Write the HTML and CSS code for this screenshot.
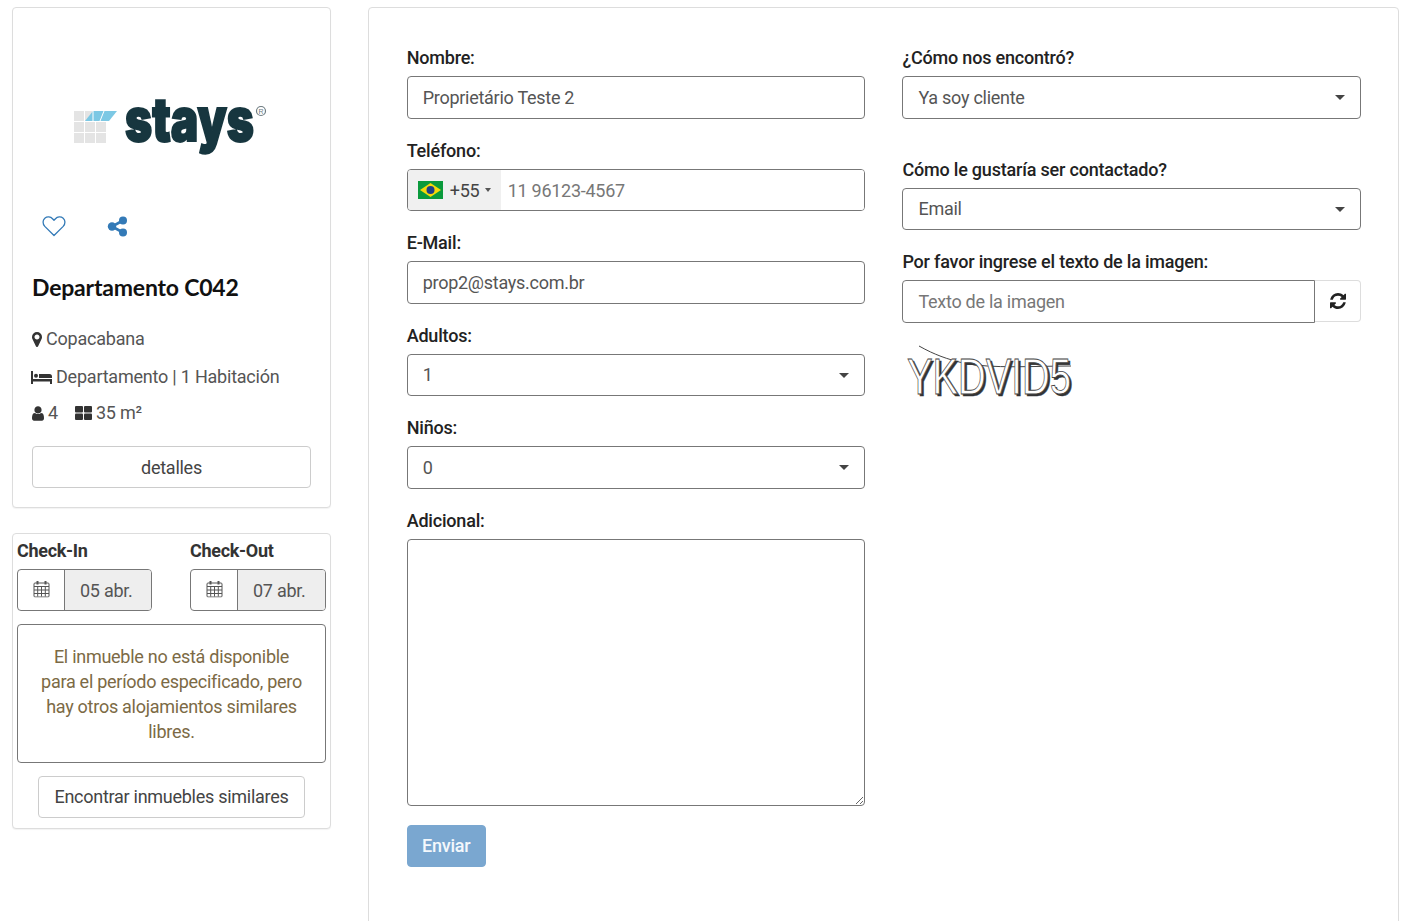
FILE: index.html
```html
<!DOCTYPE html>
<html lang="es">
<head>
<meta charset="utf-8">
<title>Departamento C042</title>
<link rel="stylesheet" href="styles.css">
</head>
<body>
<div class="page">
  <aside class="side">
    <section class="card listing">
      <div class="logo">
        <svg width="200" height="60" viewBox="0 0 200 60">
          <g fill="#e4e4e4">
            <rect x="0" y="20" width="10" height="10"/><rect x="11" y="20" width="10" height="10"/><rect x="22" y="20" width="10" height="10"/>
            <rect x="0" y="31" width="10" height="10"/><rect x="11" y="31" width="10" height="10"/><rect x="22" y="31" width="10" height="10"/>
            <rect x="0" y="42" width="10" height="10"/><rect x="11" y="42" width="10" height="10"/><rect x="22" y="42" width="10" height="10"/>
          </g>
          <path d="M19 20h24l-8 10H11z" fill="#7cc8e4"/>
          <path d="M19 20v10M30 20l-4 10" stroke="#fff" stroke-width="1"/>
          <text x="51" y="50" class="logo-word" textLength="129" lengthAdjust="spacingAndGlyphs">stays</text>
          <circle cx="187" cy="20" r="4.500" fill="none" stroke="#6d7b80" stroke-width="1.200"/>
          <text x="187" y="22.500" class="logo-reg">R</text>
        </svg>
      </div>
      <div class="actions">
        <svg class="ic-heart" width="24" height="22" viewBox="0 0 24 22"><path d="M12 20.500 2.800 11.400C.4 8.800.6 5.200 2.800 3.200c2.400-2 5.800-1.600 7.700.5L12 5.300l1.500-1.600c1.900-2.100 5.300-2.500 7.700-.5 2.200 2 2.400 5.600 0 8.200z" fill="none" stroke="#337ab7" stroke-width="1.300" stroke-linejoin="round"/></svg>
        <svg class="ic-share" width="21" height="21" viewBox="0 0 21 21"><path d="M16 4.500 5 10.500l11 6" fill="none" stroke="#337ab7" stroke-width="2.600"/><circle cx="16" cy="4.500" r="4" fill="#337ab7"/><circle cx="5" cy="10.500" r="4.200" fill="#337ab7"/><circle cx="16" cy="16.500" r="4" fill="#337ab7"/></svg>
      </div>
      <h1 class="title">Departamento C042</h1>
      <p class="meta meta-place">
        <svg class="ic" width="10" height="15" viewBox="0 128 1024 1536"><path d="M768 640q0-106-75-181t-181-75-181 75-75 181 75 181 181 75 181-75 75-181zm256 0q0 109-33 179l-364 774q-16 33-47.500 52t-67.500 19-67.500-19-46.500-52l-365-774q-33-70-33-179 0-212 150-362t362-150 362 150 150 362z" fill="#333"/></svg>
        <span>Copacabana</span>
      </p>
      <p class="meta meta-type">
        <svg class="ic ic-bed" width="21" height="13" viewBox="0 0 21 13"><path d="M0 0h2v8h19v5h-2v-2.500H2V13H0z" fill="#333"/><circle cx="5" cy="4.800" r="2" fill="#333"/><path d="M8 3h10.500A2.500 2.500 0 0 1 21 5.500V7H8z" fill="#333"/></svg>
        <span>Departamento | 1 Habitación</span>
      </p>
      <p class="meta meta-size">
        <svg class="ic" width="12" height="15" viewBox="256 128 1280 1536"><path d="M1536 1399q0 109-62.500 187t-150.500 78h-854q-88 0-150.500-78t-62.500-187q0-85 8.500-160.500t31.500-152 58.500-131 94-89 134.500-34.500q131 128 313 128t313-128q76 0 134.500 34.500t94 89 58.500 131 31.500 152 8.500 160.500zm-256-887q0 159-112.500 271.500t-271.500 112.500-271.500-112.500-112.500-271.500 112.500-271.500 271.500-112.500 271.500 112.500 112.500 271.500z" fill="#333"/></svg>
        <span class="guests">4</span>
        <svg class="ic" width="17" height="14" viewBox="0 0 17 14"><rect x="0" y="0" width="8" height="6.500" rx="1" fill="#333"/><rect x="9" y="0" width="8" height="6.500" rx="1" fill="#333"/><rect x="0" y="7.500" width="8" height="6.500" rx="1" fill="#333"/><rect x="9" y="7.500" width="8" height="6.500" rx="1" fill="#333"/></svg>
        <span>35 m²</span>
      </p>
      <button class="btn btn-details" type="button">detalles</button>
    </section>

    <section class="card booking">
      <div class="dates">
        <div class="date">
          <div class="date-label">Check-In</div>
          <div class="date-group">
            <span class="date-icon"><svg width="17" height="18" viewBox="0 0 17 17"><use href="#cal"/></svg></span>
            <span class="date-value">05 abr.</span>
          </div>
        </div>
        <div class="date">
          <div class="date-label">Check-Out</div>
          <div class="date-group">
            <span class="date-icon"><svg width="17" height="18" viewBox="0 0 17 17"><use href="#cal"/></svg></span>
            <span class="date-value">07 abr.</span>
          </div>
        </div>
      </div>
      <div class="notice">El inmueble no está disponible para el período especificado, pero hay otros alojamientos similares libres.</div>
      <button class="btn btn-similar" type="button">Encontrar inmuebles similares</button>
    </section>
  </aside>

  <main class="panel">
    <form class="form">
      <div class="col">
        <div class="group">
          <label class="label">Nombre:</label>
          <input class="control" type="text" value="Proprietário Teste 2">
        </div>
        <div class="group">
          <label class="label">Teléfono:</label>
          <div class="control phone">
            <span class="dial">
              <svg width="25" height="18" viewBox="0 0 25 18"><rect width="25" height="18" fill="#0a9a3c"/><path d="M12.500 2 23 9 12.500 16 2 9z" fill="#f5d90a"/><circle cx="12.500" cy="9" r="4" fill="#1f3f86"/></svg>
              <span class="dial-code">+55</span>
              <i class="dial-caret"></i>
            </span>
            <input class="phone-input" type="text" placeholder="11 96123-4567">
          </div>
        </div>
        <div class="group">
          <label class="label">E-Mail:</label>
          <input class="control" type="text" value="prop2@stays.com.br">
        </div>
        <div class="group">
          <label class="label">Adultos:</label>
          <div class="select-wrap"><select class="control select"><option>1</option></select></div>
        </div>
        <div class="group">
          <label class="label">Niños:</label>
          <div class="select-wrap"><select class="control select"><option>0</option></select></div>
        </div>
        <div class="group">
          <label class="label">Adicional:</label>
          <textarea class="control area"></textarea>
        </div>
        <button class="btn-send" type="button">Enviar</button>
      </div>
      <div class="col">
        <div class="group group-wide">
          <label class="label">¿Cómo nos encontró?</label>
          <div class="select-wrap"><select class="control select"><option>Ya soy cliente</option></select></div>
        </div>
        <div class="group">
          <label class="label">Cómo le gustaría ser contactado?</label>
          <div class="select-wrap"><select class="control select"><option>Email</option></select></div>
        </div>
        <div class="group">
          <label class="label">Por favor ingrese el texto de la imagen:</label>
          <div class="captcha-row">
            <input class="control captcha-input" type="text" placeholder="Texto de la imagen">
            <span class="captcha-refresh">
              <svg width="16" height="16" viewBox="128 128 1536 1536"><path d="M1639 1056q0 5-1 7-64 268-268 434.500t-478 166.500q-146 0-282.500-55t-243.500-157l-129 129q-19 19-45 19t-45-19-19-45v-448q0-26 19-45t45-19h448q26 0 45 19t19 45-19 45l-137 137q71 66 161 102t187 36q134 0 250-65t186-179q11-17 53-117 8-23 30-23h192q13 0 22.500 9.500t9.500 22.500zm25-800v448q0 26-19 45t-45 19h-448q-26 0-45-19t-19-45 19-45l138-138q-148-137-349-137-134 0-250 65t-186 179q-11 17-53 117-8 23-30 23h-199q-13 0-22.500-9.500t-9.500-22.500v-7q65-268 270-434.500t480-166.500q146 0 284 55.500t245 156.500l130-129q19-19 45-19t45 19 19 45z" fill="#222"/></svg>
            </span>
          </div>
          <svg class="captcha" width="172" height="58" viewBox="0 0 172 58">
            <path d="M14 2C30 11 42 15 58 19c30 6 70 3 108 3" fill="none" stroke="#444" stroke-width="1"/>
            <text x="4" y="52" class="captcha-shadow" textLength="164" lengthAdjust="spacingAndGlyphs">YKDVID5</text>
            <text x="2" y="50" class="captcha-text" textLength="164" lengthAdjust="spacingAndGlyphs">YKDVID5</text>
          </svg>
        </div>
      </div>
    </form>
  </main>
</div>
<svg class="defs" width="0" height="0">
  <symbol id="cal" viewBox="0 0 17 17">
    <rect x="1" y="2.500" width="15" height="14" rx="1" fill="#fff" stroke="#555"/>
    <path d="M1 6h15M1 9.500h15M1 13h15M4.700 6v10M8.500 6v10M12.300 6v10" stroke="#555" stroke-width="1" fill="none"/>
    <path d="M4.500 0.500v3.500M12.500 0.500v3.500" stroke="#555" stroke-width="2"/>
  </symbol>
</svg>
</body>
</html>
```
FILE: styles.css
```css
* { box-sizing: border-box; }
html, body { margin: 0; height: 921px; overflow: hidden; background: #fff; }
body { font-family: Roboto, "Liberation Sans", sans-serif; font-size: 18px; color: #555; letter-spacing: -.27px; }
.page { display: flex; align-items: flex-start; gap: 37px; padding: 7px 21px 0 12px; }
.side { width: 319px; flex: none; display: flex; flex-direction: column; gap: 25px; }
.card { background: #fff; border: 1px solid #ddd; border-radius: 4px; box-shadow: 0 1px 1px rgba(0,0,0,.05); }
.listing { height: 501px; padding: 0 19px; display: flex; flex-direction: column; }
.logo { margin: 83px 0 0 42px; height: 60px; }
.logo svg { display: block; overflow: visible; }
.logo-word { font-family: Inter, Lato, sans-serif; font-weight: 900; font-size: 60px; fill: #17363f; stroke: #17363f; stroke-width: 2px; letter-spacing: 0; }
.logo-reg { font-family: "Liberation Sans", sans-serif; font-size: 7px; fill: #6d7b80; text-anchor: middle; letter-spacing: 0; }
.actions { display: flex; align-items: center; margin: 60px 0 0 10px; height: 30px; }
.ic-heart { margin-right: 41px; }
.title { font-family: Lato, sans-serif; font-weight: 700; font-size: 23px; line-height: 30px; color: #111; margin: 31px 0 0; letter-spacing: -.2px; }
.meta { margin: 0; display: flex; align-items: center; line-height: 26px; letter-spacing: -.22px; }
.meta-place { margin-top: 24px; }
.meta-type { margin-top: 12px; }
.meta-size { margin-top: 10px; }
.ic { flex: none; margin-right: 4px; }
.ic-bed { margin-left: -1px; }
.guests { margin-right: 17px; }
.btn { font: 18px Roboto, "Liberation Sans", sans-serif; letter-spacing: -.27px; color: #444; background: #fff; border: 1px solid #ccc; border-radius: 4px; text-align: center; padding: 0; }
.btn-details { width: 279px; height: 42px; margin: 20px 0 0; flex: none; }
.booking { height: 296px; padding: 0 4px; display: flex; flex-direction: column; }
.dates { display: flex; justify-content: space-between; }
.date { width: 136px; }
.date:first-child { width: 135px; }
.date-label { font-weight: 700; color: #333; line-height: 25px; margin-top: 4px; font-size: 18px; letter-spacing: -.3px; }
.date-group { display: flex; height: 42px; margin-top: 6px; border: 1px solid #777; border-radius: 4px; overflow: hidden; }
.date-icon { width: 47px; flex: none; display: flex; align-items: center; justify-content: center; border-right: 1px solid #777; }
.date-icon svg { margin-bottom: 2px; }
.date-value { flex: 1; background: #eee; padding: 1px 0 0 15px; line-height: 40px; }
.notice { margin-top: 13px; height: 139px; border: 1px solid #777; border-radius: 4px; padding: 19px 18px 0; text-align: center; line-height: 25px; color: #7c6a45; }
.btn-similar { width: 267px; height: 42px; margin: 13px auto 0; padding-bottom: 2px; }
.panel { flex: 1; height: 960px; border: 1px solid #ddd; border-radius: 4px; padding: 37px 37px 0 37.700px; }
.form { display: flex; gap: 37.200px; }
.col { flex: 1; min-width: 0; }
.group { margin-bottom: 19px; }
.group-wide { margin-bottom: 38px; }
.label { display: block; font-weight: 500; color: #222; line-height: 25px; margin-bottom: 6px; font-size: 18px; letter-spacing: -.2px; }
.control { display: block; width: 100%; height: 42.500px; padding: 0 15px; border: 1px solid #777; border-radius: 4px; background: #fff; font: 18px Roboto, "Liberation Sans", sans-serif; letter-spacing: -.27px; color: #555; outline: none; }
.control::placeholder, .phone-input::placeholder { color: #777; opacity: 1; }
.select { appearance: none; -webkit-appearance: none; }
.select-wrap { position: relative; }
.select-wrap::after { content: ""; position: absolute; right: 16px; top: 19px; border-left: 5px solid transparent; border-right: 5px solid transparent; border-top: 5px solid #444; }
.phone { display: flex; padding: 0; overflow: hidden; }
.dial { width: 93px; flex: none; background: #f0f0f0; display: flex; align-items: center; padding-left: 10px; }
.dial-code { margin: 1px 0 0 7px; color: #444; }
.dial-caret { margin-left: 6px; border-left: 3px solid transparent; border-right: 3px solid transparent; border-top: 4px solid #555; }
.phone-input { flex: 1; min-width: 0; border: 0; outline: none; padding: 2px 0 0 7px; font: 18px Roboto, "Liberation Sans", sans-serif; letter-spacing: -.27px; color: #555; }
.area { height: 267px; resize: vertical; padding: 6px 15px; }
.btn-send { display: block; width: 79px; height: 42px; margin-top: 19px; background: #7aa7d0; border: 1px solid #7aa7d0; border-radius: 4px; color: #f4f8fc; font: 500 18px Roboto, "Liberation Sans", sans-serif; letter-spacing: -.27px; padding: 0; }
.captcha-row { display: flex; }
.captcha-input { flex: 1; width: auto; min-width: 0; border-radius: 4px 0 0 4px; }
.captcha-refresh { width: 46px; height: 42px; flex: none; display: flex; align-items: center; justify-content: center; border: 1px solid #ddd; border-left: 0; border-radius: 0 4px 4px 0; }
.captcha { display: block; margin: 21px 0 0 3px; overflow: visible; }
.captcha-text { font-family: "Liberation Sans", sans-serif; font-size: 50px; fill: #fff; stroke: #444; stroke-width: .8px; letter-spacing: 0; }
.captcha-shadow { font-family: "Liberation Sans", sans-serif; font-size: 50px; fill: #333; stroke: #333; stroke-width: .5px; letter-spacing: 0; }
.defs { position: absolute; }
```
